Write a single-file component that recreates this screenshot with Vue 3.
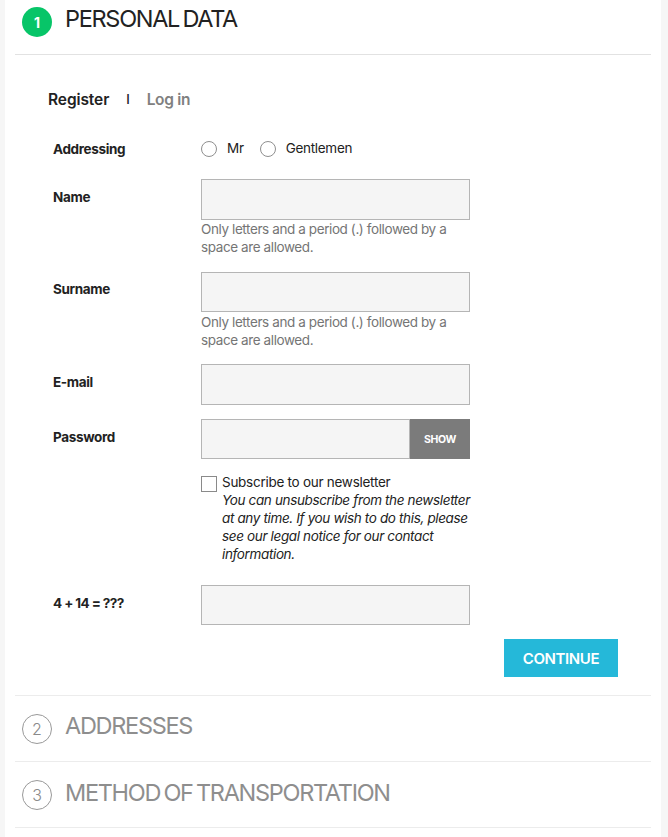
<script setup>
const nameHint = 'Only letters and a period (.) followed by a space are allowed.'
</script>

<template>
  <div class="page">
    <div class="card">
      <div class="step active">
        <span class="num">1</span>
        <h2>PERSONAL DATA</h2>
      </div>

      <div class="tabs">
        <span class="tab-on">Register</span>
        <span class="sep">I</span>
        <span class="tab-off">Log in</span>
      </div>

      <form class="form" @submit.prevent>
        <div class="row row-radio">
          <label class="lbl">Addressing</label>
          <div class="radios">
            <span class="radio"></span><span class="radio-text">Mr</span>
            <span class="radio"></span><span class="radio-text">Gentlemen</span>
          </div>
        </div>

        <div class="row row-name">
          <label class="lbl">Name</label>
          <div class="ctrl">
            <input class="inp" type="text" />
            <p class="hint">{{ nameHint }}</p>
          </div>
        </div>

        <div class="row row-surname">
          <label class="lbl">Surname</label>
          <div class="ctrl">
            <input class="inp" type="text" />
            <p class="hint">{{ nameHint }}</p>
          </div>
        </div>

        <div class="row row-mail">
          <label class="lbl">E-mail</label>
          <div class="ctrl"><input class="inp" type="text" /></div>
        </div>

        <div class="row row-pass">
          <label class="lbl">Password</label>
          <div class="ctrl pass">
            <input class="inp" type="password" />
            <button class="show" type="button">SHOW</button>
          </div>
        </div>

        <div class="row row-news">
          <span></span>
          <div class="news">
            <span class="check"></span>
            <div class="news-text">
              <div>Subscribe to our newsletter</div>
              <em>You can unsubscribe from the newsletter at any time. If you wish to do this, please see our legal notice for our contact information.</em>
            </div>
          </div>
        </div>

        <div class="row row-captcha">
          <label class="lbl">4 + 14 = ???</label>
          <div class="ctrl"><input class="inp" type="text" /></div>
        </div>

        <div class="actions">
          <button class="continue" type="submit">CONTINUE</button>
        </div>
      </form>

      <div class="step closed">
        <span class="num">2</span>
        <h2>ADDRESSES</h2>
      </div>
      <div class="step closed last">
        <span class="num">3</span>
        <h2>METHOD OF TRANSPORTATION</h2>
      </div>
    </div>
  </div>
</template>

<style>
html, body {
  margin: 0;
  background: #f6f6f6;
}
</style>

<style scoped>
.page {
  width: 668px;
  height: 837px;
  overflow: hidden;
  background: #f6f6f6;
  font-family: Inter, "Liberation Sans", sans-serif;
  color: #222;
}

.card {
  width: 636px;
  height: 837px;
  margin-left: 5px;
  padding: 0 10px;
  background: #fff;
}

.step {
  display: flex;
  align-items: flex-start;
  margin: 0;
  border-bottom: 1px solid #e2e2e2;
}
.step.active {
  box-sizing: border-box;
  height: 55px;
  padding: 7px 0 0 7px;
}
.step.closed {
  height: 66px;
  box-sizing: border-box;
  padding: 18px 0 0 7px;
  border-bottom-color: #ececec;
}

.num {
  display: flex;
  align-items: center;
  justify-content: center;
  box-sizing: border-box;
  width: 30px;
  height: 30px;
  border-radius: 50%;
  font-size: 14px;
  flex: none;
}
.active .num {
  background: #07c568;
  color: #fff;
  font-weight: 700;
}
.closed .num {
  border: 1px solid #999;
  color: #8a8a8a;
  font-size: 16px;
  font-weight: 300;
}

h2 {
  margin: 0 0 0 13px;
  font-size: 23.5px;
  font-weight: 400;
  line-height: 24px;
  letter-spacing: -1.3px;
  word-spacing: -2px;
}
.closed h2 {
  color: #8e8e8e;
  margin-top: 0;
}
.closed.last h2 {
  margin-top: 1px;
}

.tabs {
  display: flex;
  align-items: center;
  margin: 34px 0 0 33px;
  height: 20px;
  font-size: 15.5px;
  font-weight: 600;
  letter-spacing: -0.1px;
}
.tab-on { color: #222; }
.sep { margin: 0 17px; font-size: 13px; font-weight: 500; }
.tab-off { color: #808080; letter-spacing: -0.3px; }

.form {
  margin-top: 30px;
}

.row {
  display: grid;
  grid-template-columns: 148px 269px;
  margin-left: 38px;
}
.row-radio { height: 40px; }
.row-surname { margin-top: 16px; }
.row-mail { margin-top: 15px; }
.row-pass { margin-top: 14px; }
.row-news { margin-top: 15px; }
.row-captcha { margin-top: 22px; }

.lbl {
  font-size: 13.5px;
  font-weight: 700;
  letter-spacing: -0.35px;
  color: #222;
  line-height: 18px;
  padding-top: 9px;
}
.row-radio .lbl { padding-top: 1px; }
.row-surname .lbl { padding-top: 8px; }
.row-captcha .lbl { letter-spacing: -0.6px; }

.radios {
  display: flex;
  align-items: center;
  height: 20px;
  font-size: 13.5px;
  letter-spacing: -0.3px;
}
.radio {
  box-sizing: border-box;
  width: 16px;
  height: 16px;
  border: 1px solid #8f8f8f;
  border-radius: 50%;
  margin-right: 10px;
}
.radio-text { margin-right: 16px; margin-bottom: 2px; }

.inp {
  display: block;
  box-sizing: border-box;
  width: 269px;
  height: 41px;
  margin: 0;
  padding: 0 8px;
  background: #f5f5f5;
  border: 1px solid #b5b5b5;
  border-radius: 0;
  outline: none;
}
.row-surname .inp, .row-pass .inp, .row-captcha .inp { height: 40px; }

.hint {
  margin: 0;
  font-size: 13.5px;
  line-height: 18px;
  letter-spacing: -0.4px;
  color: #757575;
}
.row-surname .hint { padding-top: 1px; }

.pass { display: flex; }
.pass .inp { width: 209px; }
.show {
  width: 60px;
  height: 40px;
  padding: 0;
  border: none;
  background: #7b7b7b;
  color: #fff;
  font-family: inherit;
  font-size: 10.5px;
  font-weight: 700;
  letter-spacing: -0.3px;
}

.news {
  display: flex;
  width: 272px;
}
.check {
  box-sizing: border-box;
  flex: none;
  width: 16px;
  height: 16px;
  margin-top: 2px;
  background: #fff;
  border: 1px solid #8a8a8a;
}
.news-text {
  margin: -1px 0 0 5px;
  font-size: 13.5px;
  line-height: 18px;
  letter-spacing: -0.36px;
  color: #222;
}
.news-text > div { letter-spacing: -0.27px; }

.actions {
  display: flex;
  justify-content: flex-end;
  margin-top: 14px;
  padding-right: 33px;
  height: 56px;
  border-bottom: 1px solid #ececec;
}
.continue {
  width: 114px;
  height: 38px;
  padding: 0;
  border: none;
  background: #25b8d9;
  color: #fff;
  font-family: inherit;
  font-size: 15px;
  font-weight: 600;
  letter-spacing: -0.4px;
}
</style>
